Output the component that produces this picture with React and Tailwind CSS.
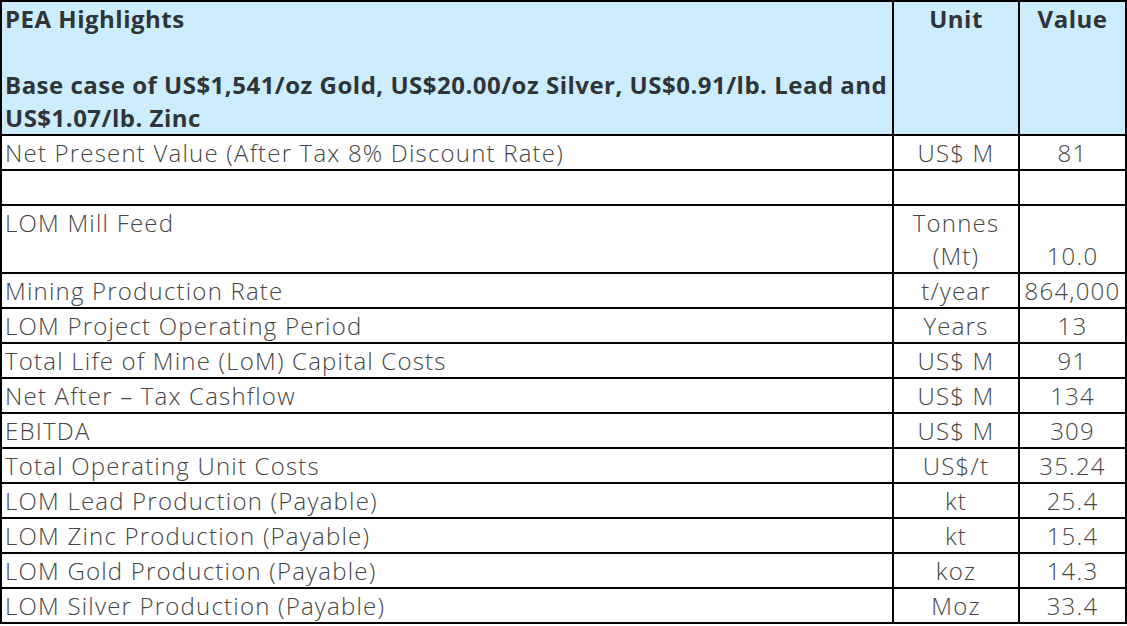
export default function App() {
  const rows = [
    ["Net Present Value (After Tax 8% Discount Rate)", "US$ M", "81"],
    ["", "", ""],
    ["LOM Mill Feed", "Tonnes (Mt)", "10.0", true],
    ["Mining Production Rate", "t/year", "864,000"],
    ["LOM Project Operating Period", "Years", "13"],
    ["Total Life of Mine (LoM) Capital Costs", "US$ M", "91"],
    ["Net After \u2013 Tax Cashflow", "US$ M", "134"],
    ["EBITDA", "US$ M", "309"],
    ["Total Operating Unit Costs", "US$/t", "35.24"],
    ["LOM Lead Production (Payable)", "kt", "25.4"],
    ["LOM Zinc Production (Payable)", "kt", "15.4"],
    ["LOM Gold Production (Payable)", "koz", "14.3"],
    ["LOM Silver Production (Payable)", "Moz", "33.4"],
  ];
  return (
    <div className="w-[1127px] h-[626px] bg-white" style={{ fontFamily: '"Open Sans", sans-serif' }}>
      <table className="w-[1127px] border-collapse border-2 border-black table-fixed text-[24px] leading-[33px]">
        <colgroup>
          <col className="w-[892px]" />
          <col className="w-[126px]" />
          <col />
        </colgroup>
        <thead>
          <tr className="bg-[#cdecfd] text-[#2f3439] font-bold tracking-[0.5px]">
            <th className="border-2 border-black text-left align-top pl-[3px] pr-0 py-0 font-bold">
              <div>PEA Highlights</div>
              <div>&nbsp;</div>
              <div className="whitespace-nowrap">Base case of US$1,541/oz Gold, US$20.00/oz Silver, US$0.91/lb. Lead and</div>
              <div>US$1.07/lb. Zinc</div>
            </th>
            <th className="border-2 border-black text-center align-top p-0 font-bold">Unit</th>
            <th className="border-2 border-black text-center align-top p-0 font-bold">Value</th>
          </tr>
        </thead>
        <tbody className="text-[#454545] font-light tracking-[1.2px]">
          {rows.map(([a, b, c, tall], i) => (
            <tr key={i}>
              <td className="border-2 border-black pl-[3px] py-0 align-top whitespace-nowrap">{a || "\u00a0"}</td>
              <td className="border-2 border-black text-center p-0 align-top">
                {tall ? (<><div>Tonnes</div><div>(Mt)</div></>) : b}
              </td>
              <td className="border-2 border-black text-center p-0 align-bottom">{c}</td>
            </tr>
          ))}
        </tbody>
      </table>
    </div>
  );
}
